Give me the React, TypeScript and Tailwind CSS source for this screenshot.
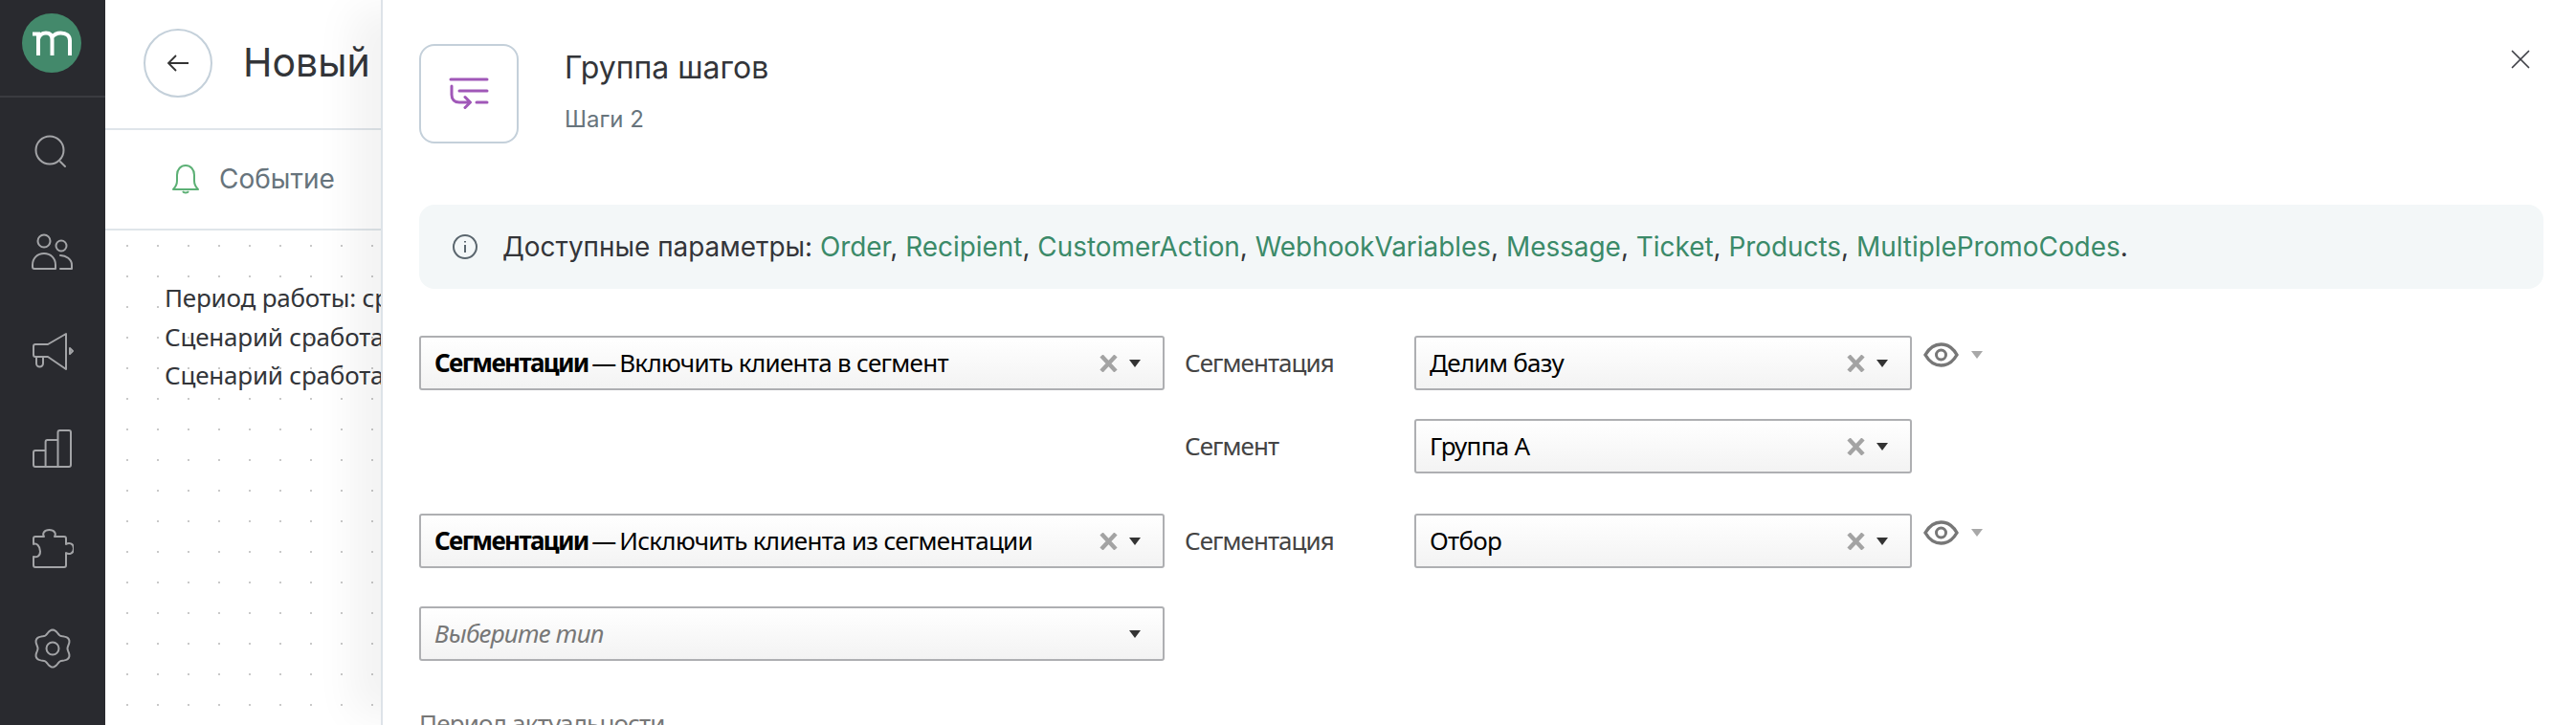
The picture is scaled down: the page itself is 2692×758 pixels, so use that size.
import { X } from 'lucide-react'

const SELECT_FONT = { fontFamily: '"Noto Sans", sans-serif' }

const LINKS = [
  'Order',
  'Recipient',
  'CustomerAction',
  'WebhookVariables',
  'Message',
  'Ticket',
  'Products',
  'MultiplePromoCodes',
]

// Six-lobed settings gear, sampled around the centre of a 44x44 box.
const GEAR_PATH =
  Array.from({ length: 72 }, (_, i) => {
    const angle = (i / 72) * Math.PI * 2
    const radius = 17.5 + 2 * Math.cos(6 * angle)
    const x = 22 + radius * Math.sin(angle)
    const y = 22 - radius * Math.cos(angle)
    return `${i === 0 ? 'M' : 'L'}${x.toFixed(2)} ${y.toFixed(2)}`
  }).join('') + 'Z'

function Logo() {
  return (
    <div className="mr-[2px] flex h-[62px] w-[62px] items-center justify-center rounded-full bg-[#43896b]">
      <svg width="41" height="26" viewBox="0 0 41 26" fill="none" stroke="#fff" strokeWidth="4">
        <path d="M0 3.500h6v22.500M6 9c1-4 4-6.500 8-6.500 5 0 6.500 3 6.500 7V26M20.500 7c2-3 5-4.500 9-4.500 6 0 9.500 3 9.500 8V26" />
      </svg>
    </div>
  )
}

function NavIcon({ children }: { children: React.ReactNode }) {
  return (
    <div className="flex h-[104.4px] w-full items-center justify-center">
      <svg width="44" height="44" viewBox="0 0 44 44" fill="none" stroke="#a3a4a7" strokeWidth="2" strokeLinecap="round" strokeLinejoin="round">
        {children}
      </svg>
    </div>
  )
}

function Sidebar() {
  return (
    <aside className="flex w-[110px] shrink-0 flex-col bg-[#292a2f]">
      <div className="flex h-[102px] shrink-0 items-center justify-center border-b-2 border-[#3a3b40] pb-[10px]">
        <Logo />
      </div>
      <div className="flex flex-col pt-[2px]">
        <NavIcon>
          <circle cx="19" cy="23" r="14.500" />
          <path d="M30 35l5 5" />
        </NavIcon>
        <NavIcon>
          <circle cx="13" cy="13" r="6.500" />
          <circle cx="31" cy="18" r="5.500" />
          <path d="M3 42a2 2 0 0 1-2-2v-2c0-7 5-12 12-12s12 5 12 12v4zM30 28c6 0 12 4 12 10v4H30" />
        </NavIcon>
        <NavIcon>
          <path d="M4 17h13l19-11v37L17 30H4a2 2 0 0 1-2-2V19a2 2 0 0 1 2-2zM5 30v7a3.500 3.500 0 0 0 7 0v-7M40 21l3 3-3 3z" />
        </NavIcon>
        <NavIcon>
          <path d="M14.600 41H4a2 2 0 0 1-2-2V26a2 2 0 0 1 2-2h10.600zM14.600 41V15a2 2 0 0 1 2-2h11M27.500 41V5a2 2 0 0 1 2-2h9.500a2 2 0 0 1 2 2v34a2 2 0 0 1-2 2zM14.600 41h13" />
        </NavIcon>
        <NavIcon>
          <path d="M4 9h9c-2-3 0-7 5.500-7s7.500 4 5.500 7h10a2 2 0 0 1 2 2v6c3-2 8-1 8 4.500s-5 6.500-8 4.500v13a2 2 0 0 1-2 2H4a2 2 0 0 1-2-2v-9c3 1 7 0 7-5.500S5 15 2 17v-6a2 2 0 0 1 2-2z" />
        </NavIcon>
        <NavIcon>
          <circle cx="22" cy="22" r="6.500" />
          <path d={GEAR_PATH} />
        </NavIcon>
      </div>
    </aside>
  )
}

function Clear() {
  return (
    <svg width="19" height="18" viewBox="0 0 19 18" fill="none" stroke="#a3a3a3" strokeWidth="4.4">
      <path d="M2 1l15 16M17 1L2 17" />
    </svg>
  )
}

function Caret({ light }: { light?: boolean }) {
  return <span className={`h-0 w-0 border-x-[6.5px] border-t-[8px] border-x-transparent ${light ? 'border-t-[#a8a8a8]' : 'border-t-[#333]'}`} />
}

function Select({ children, width, clearable = true }: { children: React.ReactNode; width: string; clearable?: boolean }) {
  return (
    <div
      className={`flex h-[57px] shrink-0 items-center justify-between rounded-[3px] border-2 border-[#aeafb2] bg-gradient-to-b from-white to-[#f3f3f3] pr-[23px] pl-[14px] text-[26px] tracking-[-0.7px] text-black ${width}`}
      style={SELECT_FONT}
    >
      <span className="whitespace-nowrap">{children}</span>
      <span className="flex items-center gap-[12px]">
        {clearable && <Clear />}
        <Caret />
      </span>
    </div>
  )
}

function TypeValue({ title, children }: { title: string; children: React.ReactNode }) {
  return (
    <>
      <b className="tracking-[-1.65px]">{title}</b> <span className="-mx-[2.5px]">—</span> {children}
    </>
  )
}

function Eye() {
  return (
    <div className="ml-[12px] flex h-[40px] items-center gap-[13px] self-start">
      <svg width="37" height="26" viewBox="0 0 37 26" fill="none" stroke="#777" strokeWidth="3.4">
        <path d="M2 13C6 6 11 2 18.500 2S31 6 35 13c-4 7-9 11-16.500 11S6 20 2 13z" />
        <circle cx="18.500" cy="13" r="5" strokeWidth="3" />
      </svg>
      <Caret light />
    </div>
  )
}

function Label({ children }: { children: React.ReactNode }) {
  return (
    <span className="w-[240px] shrink-0 text-[26px] tracking-[-0.95px] text-[#444]" style={SELECT_FONT}>
      {children}
    </span>
  )
}

function StepPanel() {
  return (
    <div className="absolute inset-y-0 right-0 left-[288px] flex flex-col border-l-2 border-[#dde3e8] bg-white shadow-[-40px_0_40px_-10px_rgba(0,0,0,0.05)]">
      <X className="absolute top-[45px] right-[41px] text-[#3e4046]" size={34} strokeWidth={1.2} />
      <div className="flex shrink-0 pt-[46px] pl-[38px]">
        <div className="flex h-[104px] w-[104px] items-center justify-center rounded-[16px] border-2 border-[#c4d0da]">
          <svg width="42" height="34" viewBox="0 0 42 34" fill="none" stroke="#a058b8" strokeWidth="3" strokeLinecap="round" strokeLinejoin="round">
            <path d="M2 2h38M11 14h29M29 26h11M3 9v9c0 5 3 8 8 8h11M17 20.500l5.500 5.500-5.500 5.500" />
          </svg>
        </div>
        <div className="ml-[48px] pt-[5px]">
          <div className="text-[32px] leading-[40px] text-[#333539]">Группа шагов</div>
          <div className="mt-[19px] text-[24px] leading-[30px] text-[#67747c]">Шаги 2</div>
        </div>
      </div>
      <div className="mt-[64px] mr-[34px] ml-[38px] flex h-[88px] shrink-0 items-center rounded-[16px] bg-[#f3f7f8] pl-[35px] text-[27.9px] text-[#333539]">
        <svg width="26" height="26" viewBox="0 0 26 26" fill="none" stroke="#5a666e" strokeWidth="2" className="mr-[26px]">
          <circle cx="13" cy="13" r="12" />
          <path d="M13 11v8M13 7v1.500" />
        </svg>
        <span className="pt-[2px] whitespace-nowrap">
          Доступные параметры:{' '}
          {LINKS.map((link, index) => (
            <span key={link}>
              <span className="text-[#3b8a69]">{link}</span>
              {index < LINKS.length - 1 ? ', ' : '.'}
            </span>
          ))}
        </span>
      </div>
      <div className="mt-[49px] ml-[38px] flex flex-col">
        <div className="flex items-center">
          <Select width="w-[779px]">
            <TypeValue title="Сегментации">Включить клиента в сегмент</TypeValue>
          </Select>
          <span className="ml-[21px]" />
          <Label>Сегментация</Label>
          <Select width="w-[520px]">Делим базу</Select>
          <Eye />
        </div>
        <div className="mt-[30px] ml-[800px] flex items-center">
          <Label>Сегмент</Label>
          <Select width="w-[520px]">Группа А</Select>
        </div>
        <div className="mt-[42px] flex items-center">
          <Select width="w-[779px]">
            <TypeValue title="Сегментации">Исключить клиента из сегментации</TypeValue>
          </Select>
          <span className="ml-[21px]" />
          <Label>Сегментация</Label>
          <Select width="w-[520px]">Отбор</Select>
          <Eye />
        </div>
        <div className="mt-[40px]">
          <Select width="w-[779px]" clearable={false}>
            <i className="text-[#777]">Выберите тип</i>
          </Select>
        </div>
        <div className="mt-[46px] text-[26px] tracking-[-0.85px] text-[#777]" style={SELECT_FONT}>
          Период актуальности
        </div>
      </div>
    </div>
  )
}

export default function App() {
  return (
    <div className="flex h-[758px] w-[2692px] overflow-hidden bg-white font-['Inter',sans-serif]">
      <Sidebar />
      <main className="relative flex-1">
        <div className="w-[288px] overflow-hidden">
          <div className="flex h-[136px] items-center border-b-2 border-[#dfe5ea] pb-[2px] pl-[40px]">
            <button type="button" className="flex h-[72px] w-[72px] shrink-0 items-center justify-center rounded-full border-2 border-[#c4d0da] text-[#333]">
              <svg width="24" height="20" viewBox="0 0 24 20" fill="none" stroke="currentColor" strokeWidth="1.8">
                <path d="M23 10H2M10 2l-8 8 8 8" />
              </svg>
            </button>
            <h1 className="ml-[32px] text-[41px] whitespace-nowrap text-[#333539]">Новый сценарий</h1>
          </div>
          <div className="flex h-[105px] items-center border-b-2 border-[#dfe5ea] pb-[2px] pl-[69px]">
            <svg width="30" height="32" viewBox="0 0 30 32" fill="none" stroke="#5cb075" strokeWidth="2" strokeLinejoin="round">
              <path d="M2 27c3-3 4-5 4-9v-6c0-6 4-10 9-10s9 4 9 10v6c0 4 1 6 4 9zM12 29c1 2 5 2 6 0" />
            </svg>
            <span className="ml-[20px] text-[28px] text-[#67747c]">Событие</span>
          </div>
          <div
            className="h-[517px] bg-[radial-gradient(#c9c9c9_1px,transparent_1.5px)] bg-[length:32px_32px] bg-[position:7px_0px] pt-[50px] pl-[62px] text-[26px] leading-[40.5px] tracking-[-0.2px] whitespace-nowrap text-[#333539]"
            style={SELECT_FONT}
          >
            <div>Период работы: срок действия</div>
            <div>Сценарий сработает один раз</div>
            <div>Сценарий сработает для всех</div>
          </div>
        </div>
        <StepPanel />
      </main>
    </div>
  )
}
